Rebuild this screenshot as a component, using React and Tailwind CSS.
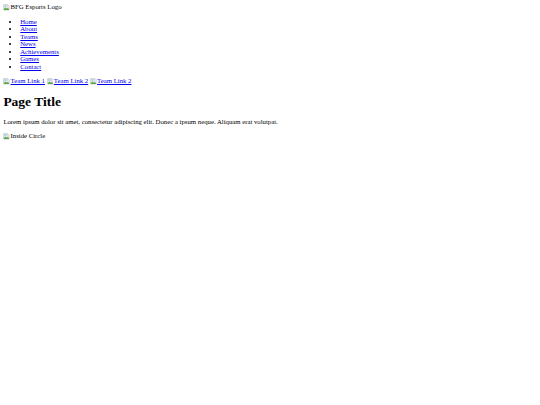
import React from "react";

function BrokenImg({ alt }) {
  return (
    <span className="inline">
      <svg
        width="16"
        height="16"
        viewBox="0 0 16 16"
        className="inline-block align-[-3px] mr-[1px]"
      >
        <path d="M1.5 1.5h10l3 3v10h-13z" fill="#f4f4f4" stroke="#9a9a9a" />
        <path d="M2 12l4-4 3 3 2-2 3 3v2H2z" fill="#5aa84a" />
        <rect x="2" y="2" width="9" height="6" fill="#bcd8ef" />
        <circle cx="9" cy="4.5" r="1.3" fill="#f6e27a" />
      </svg>
      {alt}
    </span>
  );
}

const navItems = ["Home", "About", "Teams", "News", "Achievements", "Games", "Contact"];

export default function App() {
  return (
    <div className="[zoom:0.421875] font-['Liberation_Serif',serif] text-[16px] leading-[1.12] text-black bg-white min-h-[960px] p-2">
      <header>
        <div>
          <BrokenImg alt="BFG Esports Logo" />
        </div>
        <nav>
          <ul className="list-disc pl-10 my-4">
            {navItems.map((item) => (
              <li key={item}>
                <a href="#" className="text-[#0000ee] underline">
                  {item}
                </a>
              </li>
            ))}
          </ul>
        </nav>
      </header>

      <div>
        <a href="#" className="text-[#0000ee] underline">
          <BrokenImg alt="Team Link 1" />
        </a>{" "}
        <a href="#" className="text-[#0000ee] underline">
          <BrokenImg alt="Team Link 2" />
        </a>{" "}
        <a href="#" className="text-[#0000ee] underline">
          <BrokenImg alt="Team Link 2" />
        </a>
      </div>

      <h1 className="text-[32px] leading-[1.12] font-bold my-[21.44px]">Page Title</h1>
      <p className="my-4">
        Lorem ipsum dolor sit amet, consectetur adipiscing elit. Donec a ipsum neque. Aliquam erat volutpat.
      </p>

      <div className="mt-[4px]">
        <BrokenImg alt="Inside Circle" />
      </div>
    </div>
  );
}
